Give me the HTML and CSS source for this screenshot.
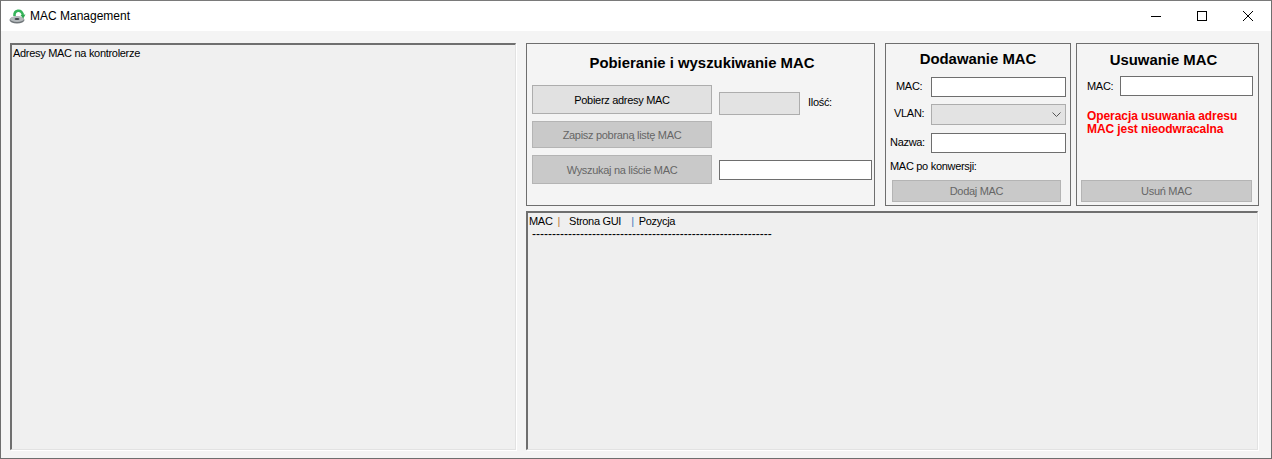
FILE: index.html
```html
<!DOCTYPE html>
<html lang="pl">
<head>
<meta charset="utf-8">
<title>MAC Management</title>
<link rel="stylesheet" href="styles.css">
</head>
<body>
<div class="window">
  <header class="titlebar">
    <svg class="app-icon" width="18" height="16" viewBox="0 0 18 16">
      <ellipse cx="8" cy="12" rx="7.500" ry="3.500" fill="#6f7579"/>
      <ellipse cx="8" cy="11" rx="7" ry="3" fill="#b4b9bc"/>
      <ellipse cx="8" cy="11" rx="2.500" ry="1" fill="#3d4347"/>
      <path d="M5.500 8 C5 2 12 .5 14 7" fill="none" stroke="#35b45a" stroke-width="2.600"/>
      <path d="M11.500 7 L16.500 6.500 L14.200 10.500 Z" fill="#2fa852"/>
    </svg>
    <span class="app-title">MAC Management</span>
    <div class="controls">
      <svg class="ctl" width="46" height="30" viewBox="0 0 46 30"><path d="M18 15.500H28" stroke="#000" fill="none"/></svg>
      <svg class="ctl" width="46" height="30" viewBox="0 0 46 30"><rect x="18.500" y="10.500" width="9" height="9" stroke="#000" fill="none"/></svg>
      <svg class="ctl" width="46" height="30" viewBox="0 0 46 30"><path d="M18 10L28 20M28 10L18 20" stroke="#000" fill="none"/></svg>
    </div>
  </header>
  <main class="content">
    <section class="sunken list">Adresy MAC na kontrolerze</section>
    <div class="right">
      <div class="panels">
        <section class="group g-fetch">
          <h2 class="title t-fetch">Pobieranie i wyszukiwanie MAC</h2>
          <div class="fetch-grid">
            <button class="btn btn-active b1">Pobierz adresy MAC</button>
            <div class="count-row">
              <div class="field field-off count"></div>
              <span class="count-label">Ilość:</span>
            </div>
            <button class="btn b2" disabled>Zapisz pobraną listę MAC</button>
            <div></div>
            <button class="btn b3" disabled>Wyszukaj na liście MAC</button>
            <div class="field search"></div>
          </div>
        </section>
        <section class="group g-add">
          <h2 class="title t-add">Dodawanie MAC</h2>
          <div class="add-grid">
            <span class="lbl l-mac">MAC:</span><div class="field f-h"></div>
            <span class="lbl l-vlan">VLAN:</span>
            <div class="field field-off select">
              <svg width="9" height="6" viewBox="0 0 9 6"><path d="M.5 .5L4.500 4.500L8.500 .5" fill="none" stroke="#555"/></svg>
            </div>
            <span class="lbl l-name">Nazwa:</span><div class="field f-h"></div>
          </div>
          <p class="converted">MAC po konwersji:</p>
          <button class="btn b-add" disabled>Dodaj MAC</button>
        </section>
        <section class="group g-del">
          <h2 class="title t-del">Usuwanie MAC</h2>
          <div class="del-row">
            <span class="lbl-del">MAC:</span><div class="field f-h del-input"></div>
          </div>
          <p class="warning">Operacja usuwania adresu<br>MAC jest nieodwracalna</p>
          <button class="btn b-del" disabled>Usuń MAC</button>
        </section>
      </div>
      <section class="sunken log">
        <div class="log-head"><span>MAC</span><span class="pipe-o">|</span><span>Strona GUI</span><span class="pipe-b">|</span><span>Pozycja</span></div>
        <div class="log-rule">------------------------------------------------------------</div>
      </section>
    </div>
  </main>
</div>
</body>
</html>
```
FILE: styles.css
```css
* { box-sizing: border-box; }
html, body { margin: 0; padding: 0; }
body {
  width: 1272px;
  height: 459px;
  overflow: hidden;
  font-family: "Liberation Sans", Arial, sans-serif;
  font-size: 11px;
  letter-spacing: -0.3px;
  color: #000;
}
.window {
  width: 1272px;
  height: 459px;
  border: 1px solid #6e6e6e;
  border-top-color: #7a7a7a;
  background: #f4f4f4;
  display: flex;
  flex-direction: column;
}
.titlebar {
  height: 30px;
  flex: none;
  background: #fff;
  display: flex;
  align-items: center;
  padding-left: 8px;
}
.app-icon { flex: none; }
.app-title { margin-left: 3px; font-size: 12px; letter-spacing: 0; }
.controls { margin-left: auto; display: flex; }
.ctl { display: block; }
.content {
  flex: 1;
  display: flex;
  padding: 12px 13px 8px 9px;
  gap: 10px;
  min-height: 0;
}
.sunken {
  border-style: solid;
  border-width: 2px 1px 1px 2px;
  border-color: #6f6f6f #e2e2e2 #e2e2e2 #6f6f6f;
  box-shadow: 1px 1px 0 #fff;
  background: #f0f0f0;
}
.list {
  width: 506px;
  flex: none;
  padding: 1px 1px;
  line-height: 14px;
}
.right {
  flex: 1;
  display: flex;
  flex-direction: column;
  gap: 5px;
  min-width: 0;
}
.panels { display: flex; height: 163px; flex: none; }
.group {
  border: 1px solid #6e6e6e;
  height: 100%;
  display: flex;
  flex-direction: column;
}
.g-fetch { width: 349px; margin-right: 10px; padding: 0 2px 0 5px; }
.g-add { width: 186px; margin-right: 5px; padding: 0 4px 0 4px; }
.g-del { width: 183px; padding: 0 5px 0 4px; }
.title {
  margin: 0;
  font-size: 14.9px;
  letter-spacing: 0;
  line-height: 16px;
  font-weight: 700;
  text-align: center;
}
.t-fetch { margin-top: 11px; margin-bottom: 14px; }
.t-add { margin-top: 7px; margin-bottom: 10px; }
.t-del { margin-top: 8px; margin-bottom: 8px; margin-right: 7px; }
.btn {
  display: block;
  font: inherit;
  letter-spacing: inherit;
  border: 1px solid #b4b4b4;
  background: #c9c9c9;
  color: #666;
  padding: 0;
  margin: 0;
}
.btn-active { background: #e1e1e1; border-color: #adadad; color: #000; }
.field { border: 1px solid #6e6e6e; background: #fff; }
.field-off { border-color: #adadad; background: #e3e3e3; }
.f-h { height: 20px; }
.fetch-grid {
  display: grid;
  grid-template-columns: 180px 153px;
  grid-template-rows: 29px 27px 29px;
  column-gap: 7px;
  row-gap: 7px;
}
.b1, .b2, .b3 { width: 100%; height: 100%; }
.count-row { display: flex; align-items: flex-start; padding-top: 7px; }
.count { width: 81px; height: 23px; flex: none; }
.count-label { margin-left: 8px; line-height: 14px; margin-top: 3px; }
.search { height: 20px; margin-top: 5px; }
.add-grid {
  display: grid;
  grid-template-columns: 41px 135px;
  grid-template-rows: 20px 22px 20px;
  row-gap: 7px;
}
.lbl { line-height: 14px; }
.l-mac { padding-left: 6px; padding-top: 2px; }
.l-vlan { padding-left: 4px; padding-top: 2px; }
.l-name { padding-top: 2px; }
.select {
  height: 21px;
  display: flex;
  align-items: center;
  justify-content: flex-end;
  padding-right: 4px;
}
.converted { margin: 6px 0 0; line-height: 14px; }
.b-add { width: 169px; height: 22px; margin-top: 7px; margin-left: 2px; }
.del-row { display: flex; align-items: center; padding-left: 6px; }
.lbl-del { width: 33px; flex: none; line-height: 14px; }
.del-input { width: 133px; }
.warning {
  margin: 14px 0 0 6px;
  font-size: 12px;
  letter-spacing: -0.08px;
  font-weight: 700;
  color: #ff0000;
  line-height: 13px;
}
.b-del { width: 171px; height: 22px; margin-top: auto; margin-bottom: 3px; }
.log {
  flex: 1;
  min-height: 0;
  background: #efefef;
  padding: 1px 0 0 1px;
  line-height: 14px;
}
.log-head { display: flex; height: 14px; }
.pipe-o { color: #bd7a3c; margin: 0 9px 0 5px; }
.pipe-b { color: #3b7bbd; margin: 0 5px 0 10px; }
.log-rule { margin: 1px 0 0 3px; white-space: nowrap; line-height: 10px; font-size: 12px; letter-spacing: 0; }
```
